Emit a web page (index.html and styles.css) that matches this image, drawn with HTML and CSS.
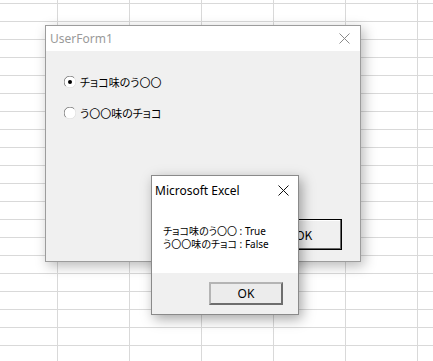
FILE: index.html
```html
<!DOCTYPE html>
<html lang="ja">
<head>
    <meta charset="utf-8">
    <title>UserForm1</title>
    <link rel="stylesheet" href="styles.css">
</head>
<body>
    <div class="sheet">

    <div class="form">
        <div class="caption">
            <span class="caption-text grey">UserForm1</span>
            <svg class="close" width="11" height="11" viewBox="0 0 11 11"><path d="M0.5 0.5 L10.5 10.5 M10.5 0.5 L0.5 10.5" stroke="#8a8a8a" stroke-width="1" fill="none"/></svg>
        </div>
        <div class="form-body">
            <div class="opt">
                <svg class="radio" width="12" height="12" viewBox="0 0 12 12">
                    <circle cx="6" cy="6" r="5.5" fill="#fff"/>
                    <path d="M1.8 10.2 A5.5 5.5 0 0 1 10.2 1.8" stroke="#808080" fill="none"/>
                    <path d="M10.2 1.8 A5.5 5.5 0 0 1 1.8 10.2" stroke="#e3e3e3" fill="none"/>
                    <circle cx="6" cy="6" r="2" fill="#000"/>
                </svg>
                <span>チョコ味のう〇〇</span>
            </div>
            <div class="opt">
                <svg class="radio" width="12" height="12" viewBox="0 0 12 12">
                    <circle cx="6" cy="6" r="5.5" fill="#fff"/>
                    <path d="M1.8 10.2 A5.5 5.5 0 0 1 10.2 1.8" stroke="#808080" fill="none"/>
                    <path d="M10.2 1.8 A5.5 5.5 0 0 1 1.8 10.2" stroke="#e3e3e3" fill="none"/>
                </svg>
                <span>う〇〇味のチョコ</span>
            </div>
            <div class="form-foot">
                <button class="vba-btn">OK</button>
            </div>
        </div>
    </div>

    <div class="msgbox">
        <div class="msg-top">
            <div class="caption msg-caption">
                <span class="caption-text">Microsoft Excel</span>
                <svg class="close" width="11" height="11" viewBox="0 0 11 11"><path d="M0.5 0.5 L10.5 10.5 M10.5 0.5 L0.5 10.5" stroke="#111" stroke-width="1" fill="none"/></svg>
            </div>
            <div class="msg-text">
                <div class="msg-line">チョコ味のう〇〇 : True</div>
                <div class="msg-line">う〇〇味のチョコ : False</div>
            </div>
        </div>
        <div class="msg-foot">
            <button class="msg-btn">OK</button>
        </div>
    </div>

    </div>
</body>
</html>
```

FILE: styles.css
```css
body {
    margin: 0;
    background: #fff;
}
.sheet {
    position: relative;
    width: 433px;
    height: 361px;
    overflow: hidden;
    background-color: #fff;
    background-image:
        linear-gradient(to right, #d9d9d9 1px, transparent 1px),
        linear-gradient(to bottom, #d9d9d9 1px, transparent 1px);
    background-size: 72px 18px;
    background-position: 57px 3px;
}

/* the user form */
.form {
    position: absolute;
    left: 45px;
    top: 25px;
    width: 316px;
    height: 237px;
    box-sizing: border-box;
    border: 1px solid #9c9c9c;
    background: #f0f0f0;
    box-shadow: 3px 4px 12px rgba(0, 0, 0, 0.28);
    display: flex;
    flex-direction: column;
}
.caption {
    height: 25px;
    background: #fff;
    display: flex;
    align-items: center;
    padding: 0 10px 0 4px;
    flex-shrink: 0;
}
.caption-text {
    flex: 1;
    font-family: "Noto Sans", sans-serif;
    font-size: 12px;
    color: #000;
}
.grey {
    color: #9a9a9a;
}
.close {
    display: block;
}
.form-body {
    flex: 1;
    display: flex;
    flex-direction: column;
    padding: 24px 18px 11px 18px;
    font-family: "Noto Sans CJK JP", sans-serif;
    font-size: 11px;
    font-feature-settings: "palt";
    color: #000;
}
.opt {
    display: flex;
    align-items: center;
    gap: 4px;
    height: 14px;
    margin-bottom: 17px;
}
.radio {
    display: block;
}
.form-foot {
    margin-top: auto;
    display: flex;
    justify-content: flex-end;
}
.vba-btn {
    width: 76px;
    height: 31px;
    box-sizing: border-box;
    border: 1px solid #000;
    box-shadow: inset -1px -1px 0 #696969, inset 1px 1px 0 #fff;
    background: #f0f0f0;
    font-family: "Noto Sans CJK JP", sans-serif;
    font-size: 12px;
    padding: 0;
}

/* message box */
.msgbox {
    position: absolute;
    left: 151px;
    top: 175px;
    width: 148px;
    height: 140px;
    box-sizing: border-box;
    border: 1px solid #8a8a8a;
    background: #f0f0f0;
    box-shadow: 3px 4px 12px rgba(0, 0, 0, 0.35);
    display: flex;
    flex-direction: column;
}
.msg-top {
    background: #fff;
    height: 97px;
}
.msg-caption {
    padding: 0 9px 0 3px;
    height: 28px;
}
.msg-text {
    padding: 21px 0 0 11px;
    font-family: "Noto Sans", "Noto Sans CJK JP", sans-serif;
    font-size: 10px;
    font-feature-settings: "palt";
    color: #000;
}
.msg-line {
    height: 13px;
    line-height: 13px;
    white-space: nowrap;
}
.msg-foot {
    flex: 1;
    display: flex;
    justify-content: flex-end;
    align-items: flex-start;
    padding: 9px 15px 0 0;
}
.msg-btn {
    width: 74px;
    height: 23px;
    box-sizing: border-box;
    border: 2px solid;
    border-color: #b4b4b4 #6e6e6e #6e6e6e #b4b4b4;
    background: #ececec;
    font-family: "Noto Sans", sans-serif;
    font-size: 12px;
    color: #000;
    padding: 0;
}
```
